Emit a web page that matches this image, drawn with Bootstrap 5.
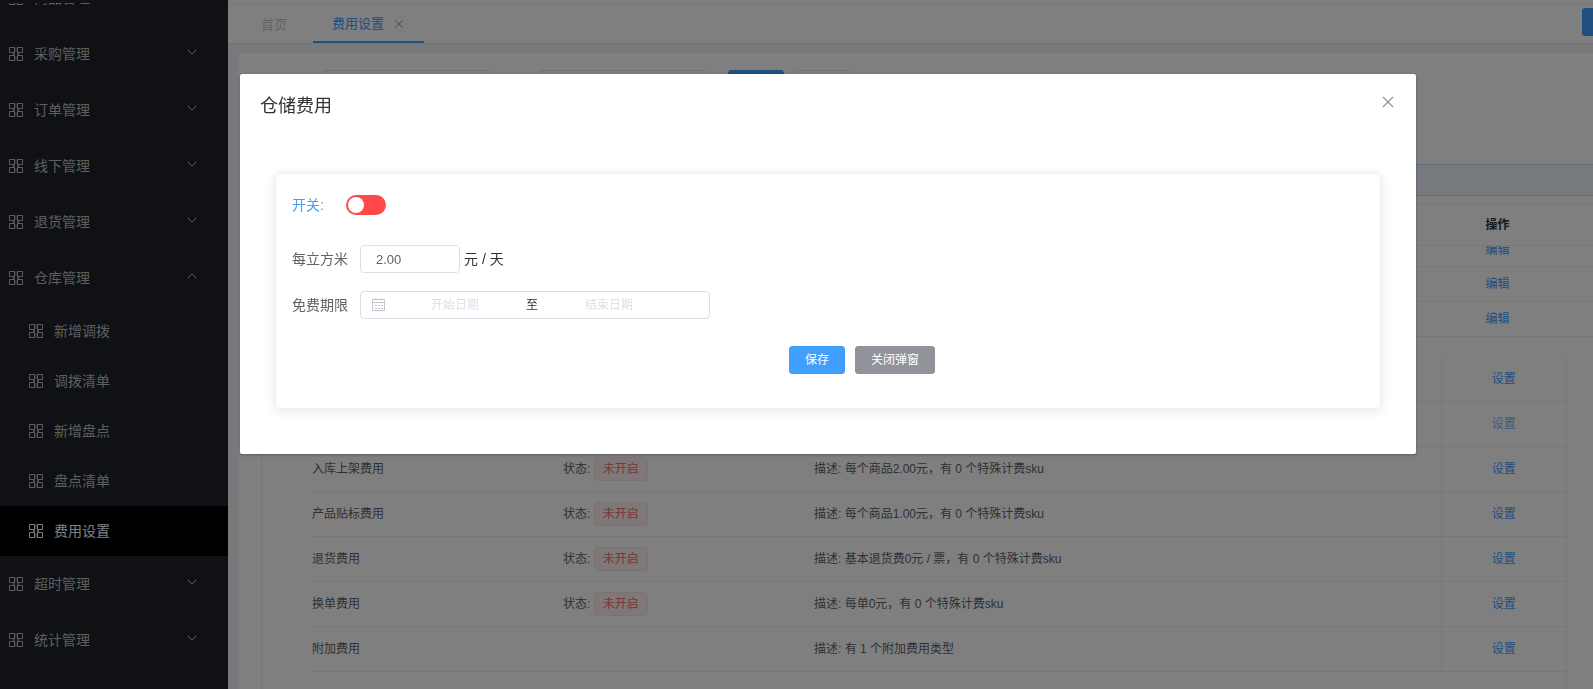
<!DOCTYPE html>
<html lang="zh-CN">
<head>
<meta charset="utf-8">
<meta name="viewport" content="width=device-width, initial-scale=1">
<title>费用设置</title>
<link href="https://cdn.jsdelivr.net/npm/bootstrap@5.3.0/dist/css/bootstrap.min.css" rel="stylesheet">
<style>
body{font-family:"Liberation Sans","Noto Sans CJK SC",sans-serif;font-size:12px;line-height:20px;color:#606266;background:#f0f2f5;height:100vh;overflow:hidden}
a{text-decoration:none;color:#409eff}
.side{width:228px;background:#20222a;font-size:14px;padding-top:3px}
.side-view{height:100%;overflow:hidden}
.side-list{margin-top:-33px}
.side-list a{color:#bcbdbf;height:56px;padding:0 30px 0 8px;gap:10px}
.side-list .sub a{height:50px;padding-left:28px}
.side-list a.current{background:#000;color:#fff}
.ico{width:16px;height:16px;flex:none}
.arrow{width:12px;height:12px;flex:none;margin-bottom:4px}
.main{min-width:0}
.topline{height:4px;background:#fff;border-bottom:1px solid #f0f0f4}
.tabs{height:40px;background:#fff;border-bottom:1px solid #e4e7ed;font-size:13px}
.tabs a{height:39px;padding:2px 19px 0}
.tabs a.on{border-bottom:2px solid #409eff;gap:9px}
.tabs a.home{color:#c8c8c8;padding:2px 26px 0 33px}
.tabs .more{width:11px;height:28px;background:#409eff;border-radius:3px 0 0 3px}
.panel{margin:9px 0 0 10px;background:#fff;border-radius:4px 0 0 0;padding-top:17px;overflow:hidden}
.filter{padding-left:84px;height:94px}
.filter input{width:168px;height:28px;border:1px solid #dcdfe6;border-radius:4px;background:#fff}
.filter button{width:56px;height:28px;border-radius:3px}
.filter .pair{margin-left:22px;gap:10px}
.notice{height:32px;background:#ecf5ff;border:1px solid #c6e2ff;border-right:0;margin-left:24px}
.grid{table-layout:fixed;width:100%;border-collapse:collapse}
.ops{margin:8px 0 0 24px}
.ops th{height:41px;border:solid #ebeef5;border-width:1px 0;color:#303133;text-align:center;font-weight:700;background:#fff}
.ops td{height:35px;border-bottom:1px solid #ebeef5;text-align:center}
.ops tr.cut td{height:21px;padding:0}
.ops .cutbox{height:20px;display:flex;align-items:flex-start;justify-content:center;overflow:hidden}
.ops .cutbox a{margin-top:-6px}
.fees{margin:20px 26px 0 23px;border:solid #ebeef5;border-width:0 1px;padding-left:50px}
.fees td{height:45px;padding:0;border-bottom:1px solid #ebeef5}
.fees tr:first-child td{height:44px}
.fees td:last-child{border-left:1px solid #ebeef5;text-align:center}
.state-tag{display:inline-block;height:24px;line-height:22px;padding:0 8px;border:1px solid #fde2e2;background:#fef0f0;color:#f56c6c;border-radius:4px}
.shade{position:fixed;inset:0;background:rgba(0,0,0,.5);padding:74px 177px 0 240px}
.dlg{background:#fff;border-radius:2px;box-shadow:0 1px 3px rgba(0,0,0,.3);padding:20px 35px 45px}
.dlg-head{margin:0 -15px}
.dlg-head h1{font-size:18px;line-height:24px;margin:0;color:#303133;font-weight:400}
.dlg-head button{width:16px;height:16px;padding:0;border:0;background:none;color:#909399}
.box{margin-top:55px;border:1px solid #ebeef5;border-radius:4px;box-shadow:0 2px 12px rgba(0,0,0,.1);padding:21px 16px 34px;color:#303133;font-size:14px}
.box .lbl{width:68px;color:#606266}
.row-switch{gap:22px;margin-bottom:30px;color:#409eff}
.row-price{margin-bottom:18px}
.row-acts{margin:27px 0 0 68px;gap:10px}
.swch.form-check-input{width:40px;height:20px;margin:0;border:0;box-shadow:none;background-color:#ff4949;background-size:20px;
background-image:url("data:image/svg+xml,%3Csvg xmlns='http://www.w3.org/2000/svg' viewBox='0 0 20 20'%3E%3Ccircle cx='10' cy='10' r='8' fill='white'/%3E%3C/svg%3E")}
.field{height:28px;border:1px solid #dcdfe6;border-radius:4px;background:#fff;color:#606266;font-size:13px;padding:0 15px}
.price{width:100px}
.range{width:350px;padding:0 10px;font-size:12px}
.range input{border:0;outline:0;width:136px;padding:0;text-align:center;background:none;font-size:12px}
.range input::placeholder{color:#dcdfe6;opacity:1}
.range span{margin:0 3px;color:#303133}
.act{height:28px;font-size:12px;line-height:26px;padding:0 15px;border-radius:3px;color:#fff;border:1px solid}
.act.save{background:#409eff;border-color:#409eff}
.act.shut{background:#909399;border-color:#909399}
</style>
</head>
<body>
<svg class="d-none" xmlns="http://www.w3.org/2000/svg">
<symbol id="grid4" viewBox="0 0 16 16"><path d="M1.500 1.500h5v5h-5zM9.500 1.500h5v5h-5zM1.500 9.500h5v5h-5zM9.500 9.500h5v5h-5z" fill="none" stroke="currentColor"/><path d="M7 1h2v5h-2zM7 10h2v5h-2z" fill="currentColor" opacity=".35"/><path d="M5 7h2v2h-2zM9 7h2v2h-2z" fill="currentColor" opacity=".8"/></symbol>
<symbol id="down" viewBox="0 0 12 12"><path d="M1.500 3.500L6 8l4.500-4.500" fill="none" stroke="currentColor"/></symbol>
<symbol id="up" viewBox="0 0 12 12"><path d="M1.500 8.500L6 4l4.500 4.500" fill="none" stroke="currentColor"/></symbol>
<symbol id="cross" viewBox="0 0 16 16"><path d="M3 3l10 10M13 3L3 13" fill="none" stroke="currentColor" stroke-width="1.2"/></symbol>
</svg>
<div class="d-flex vh-100">
<nav class="side flex-shrink-0" aria-label="主菜单">
<div class="side-view"><div class="side-list">
<a href="#" class="d-flex align-items-center"><svg class="ico"><use href="#grid4"/></svg><span class="flex-grow-1">商品管理</span></a>
<a href="#" class="d-flex align-items-center"><svg class="ico"><use href="#grid4"/></svg><span class="flex-grow-1">采购管理</span><svg class="arrow"><use href="#down"/></svg></a>
<a href="#" class="d-flex align-items-center"><svg class="ico"><use href="#grid4"/></svg><span class="flex-grow-1">订单管理</span><svg class="arrow"><use href="#down"/></svg></a>
<a href="#" class="d-flex align-items-center"><svg class="ico"><use href="#grid4"/></svg><span class="flex-grow-1">线下管理</span><svg class="arrow"><use href="#down"/></svg></a>
<a href="#" class="d-flex align-items-center"><svg class="ico"><use href="#grid4"/></svg><span class="flex-grow-1">退货管理</span><svg class="arrow"><use href="#down"/></svg></a>
<a href="#" class="d-flex align-items-center"><svg class="ico"><use href="#grid4"/></svg><span class="flex-grow-1">仓库管理</span><svg class="arrow"><use href="#up"/></svg></a>
<div class="sub">
<a href="#" class="d-flex align-items-center"><svg class="ico"><use href="#grid4"/></svg>新增调拨</a>
<a href="#" class="d-flex align-items-center"><svg class="ico"><use href="#grid4"/></svg>调拨清单</a>
<a href="#" class="d-flex align-items-center"><svg class="ico"><use href="#grid4"/></svg>新增盘点</a>
<a href="#" class="d-flex align-items-center"><svg class="ico"><use href="#grid4"/></svg>盘点清单</a>
<a href="#" class="d-flex align-items-center current"><svg class="ico"><use href="#grid4"/></svg>费用设置</a>
</div>
<a href="#" class="d-flex align-items-center"><svg class="ico"><use href="#grid4"/></svg><span class="flex-grow-1">超时管理</span><svg class="arrow"><use href="#down"/></svg></a>
<a href="#" class="d-flex align-items-center"><svg class="ico"><use href="#grid4"/></svg><span class="flex-grow-1">统计管理</span><svg class="arrow"><use href="#down"/></svg></a>
</div></div>
</nav>
<main class="main flex-grow-1 d-flex flex-column">
<div class="topline flex-shrink-0"></div>
<div class="tabs d-flex flex-shrink-0">
<a href="#" class="home d-flex align-items-center">首页</a>
<a href="#" class="on d-flex align-items-center">费用设置<svg width="12" height="12"><use href="#cross"/></svg></a>
<button class="more border-0 ms-auto p-0 mt-1" aria-label="更多"></button>
</div>
<div class="panel flex-grow-1">
<div class="filter d-flex align-items-start">
<input aria-label="名称" class="me-5"><input aria-label="类型">
<div class="pair d-flex"><button class="btn act save" aria-label="查询"></button><button class="btn bg-white border" aria-label="重置"></button></div>
</div>
<div class="notice"></div>
<div class="ops"><table class="grid"><colgroup><col><col style="width:191px"></colgroup>
<thead><tr><th></th><th>操作</th></tr></thead>
<tbody><tr class="cut"><td></td><td><div class="cutbox"><a href="#">编辑</a></div></td></tr>
<tr><td></td><td><a href="#">编辑</a></td></tr>
<tr><td></td><td><a href="#">编辑</a></td></tr></tbody></table></div>
<div class="fees"><table class="grid"><colgroup><col style="width:251px"><col style="width:251px"><col><col style="width:125px"></colgroup>
<tbody>
<tr><td></td><td></td><td></td><td><a href="#">设置</a></td></tr>
<tr><td></td><td></td><td></td><td><a href="#" class="opacity-75">设置</a></td></tr>
<tr><td>入库上架费用</td><td>状态: <span class="state-tag">未开启</span></td><td>描述: 每个商品2.00元，有 0 个特殊计费sku</td><td><a href="#">设置</a></td></tr>
<tr><td>产品贴标费用</td><td>状态: <span class="state-tag">未开启</span></td><td>描述: 每个商品1.00元，有 0 个特殊计费sku</td><td><a href="#">设置</a></td></tr>
<tr><td>退货费用</td><td>状态: <span class="state-tag">未开启</span></td><td>描述: 基本退货费0元 / 票，有 0 个特殊计费sku</td><td><a href="#">设置</a></td></tr>
<tr><td>换单费用</td><td>状态: <span class="state-tag">未开启</span></td><td>描述: 每单0元，有 0 个特殊计费sku</td><td><a href="#">设置</a></td></tr>
<tr><td>附加费用</td><td></td><td>描述: 有 1 个附加费用类型</td><td><a href="#">设置</a></td></tr>
</tbody></table><div class="pb-5"></div></div>
</div>
</main>
</div>
<div class="shade">
<div class="dlg" role="dialog" aria-labelledby="dlgTitle">
<div class="dlg-head d-flex justify-content-between align-items-start"><h1 id="dlgTitle">仓储费用</h1><button class="d-flex" aria-label="关闭"><svg width="16" height="16"><use href="#cross"/></svg></button></div>
<form class="box">
<div class="row-switch d-flex align-items-center"><label for="sw" class="text-nowrap">开关:</label><div class="form-switch p-0 m-0 d-flex"><input class="form-check-input swch" type="checkbox" role="switch" id="sw"></div></div>
<div class="row-price d-flex align-items-center"><label class="lbl" for="price">每立方米</label><input id="price" class="field price" value="2.00"><span class="ms-1">元 / 天</span></div>
<div class="d-flex align-items-center"><label class="lbl" for="from">免费期限</label>
<div class="field range d-flex align-items-center">
<svg class="flex-shrink-0" width="16" height="16" viewBox="0 0 16 16" fill="none" stroke="#c0c4cc"><path d="M1.500 2.500h12v11h-12zM1.500 5.500h12M4.500 1v2M10.500 1v2M4 8.500h2M7 8.500h2M10 8.500h2M4 11.500h2M7 11.500h2M10 11.500h2"/></svg>
<input id="from" placeholder="开始日期"><span>至</span><input aria-label="结束日期" placeholder="结束日期"></div></div>
<div class="row-acts d-flex justify-content-center"><button type="button" class="btn act save">保存</button><button type="button" class="btn act shut">关闭弹窗</button></div>
</form>
</div>
</div>
<script src="https://cdn.jsdelivr.net/npm/bootstrap@5.3.0/dist/js/bootstrap.bundle.min.js"></script>
</body>
</html>
